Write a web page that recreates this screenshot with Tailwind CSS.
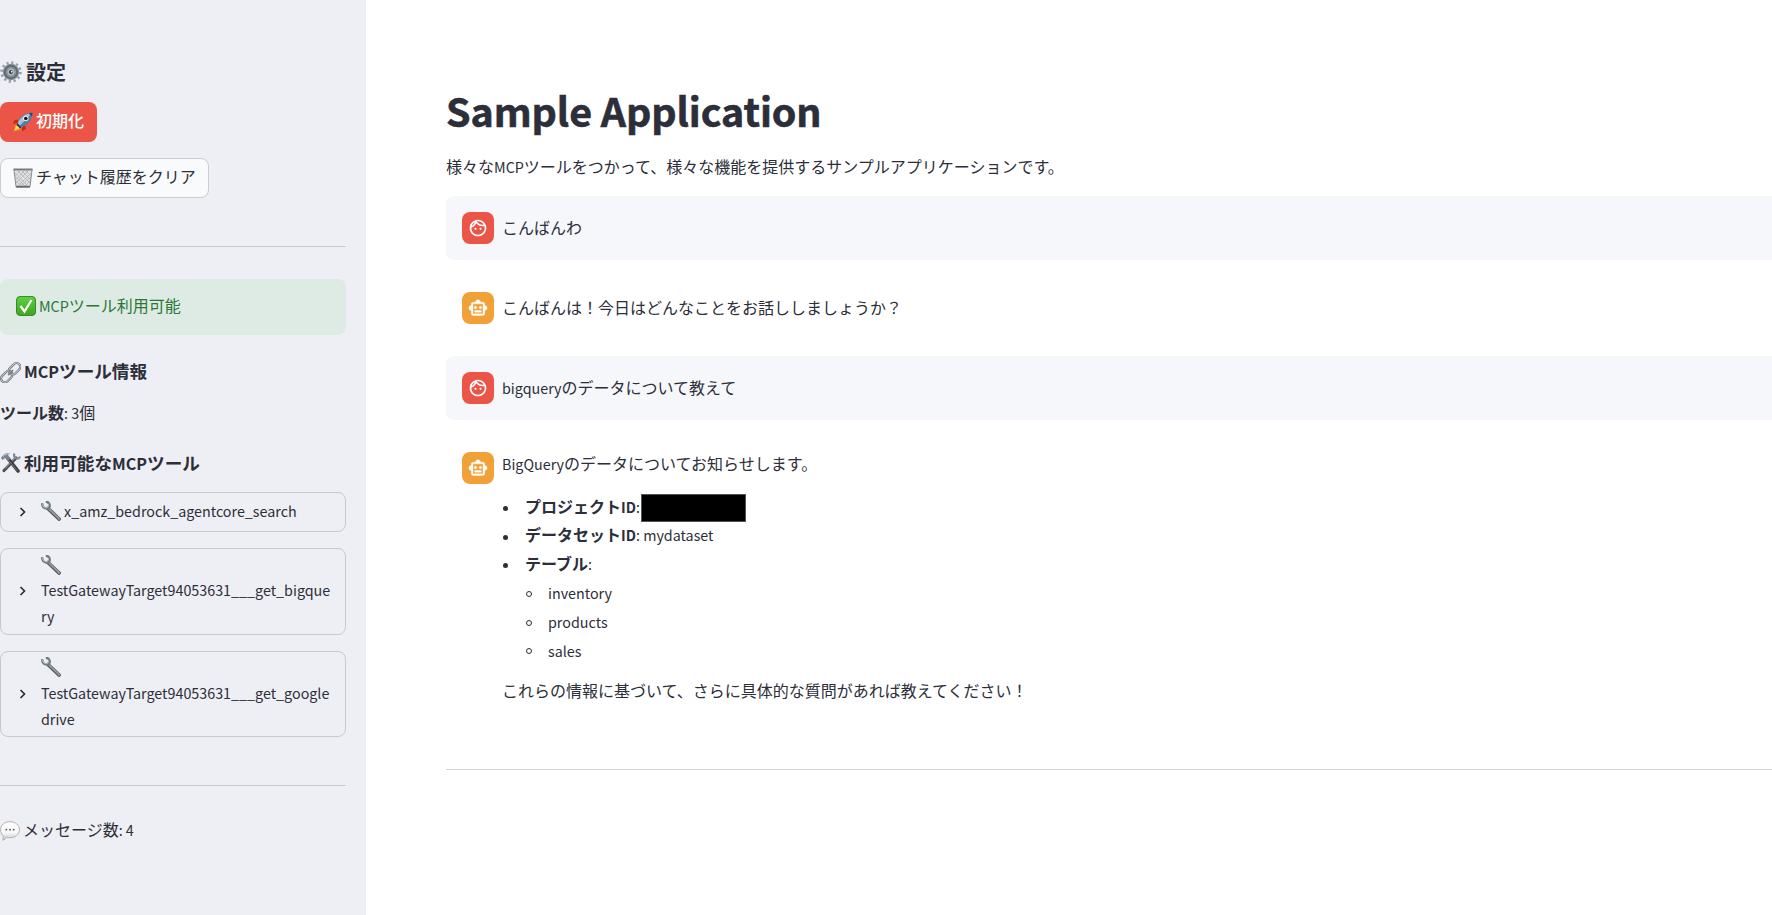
<!DOCTYPE html>
<html lang="ja">
<head>
<meta charset="utf-8">
<title>Sample Application</title>
<script src="https://cdn.jsdelivr.net/npm/@tailwindcss/browser@4"></script>
</head>
<body class="flex h-[915px] w-[1772px] overflow-hidden bg-white font-['Noto_Sans_CJK_JP',sans-serif] text-[16px] leading-[25.6px] text-[#2c2e39]">
<svg class="absolute size-0">
  <defs>
    <linearGradient id="green" x1="0" y1="0" x2="0" y2="1"><stop offset="0" stop-color="#5fd044"/><stop offset="1" stop-color="#3fa51f"/></linearGradient>
    <linearGradient id="bubble" x1="0" y1="0" x2="0" y2="1"><stop offset="0" stop-color="#fff"/><stop offset=".6" stop-color="#f6f6f5"/><stop offset="1" stop-color="#c9c9c7"/></linearGradient>
    <symbol id="wrench" viewBox="0 0 20 20">
      <path d="M7 7.500 18 18" stroke="#54575a" stroke-width="3.800" stroke-linecap="round"/>
      <path d="M7 7 17.500 17" stroke="#8f999f" stroke-width="1.800" stroke-linecap="round"/>
      <path d="M1.200 2.200C1 5.500 3 8 6.500 7.600 8.800 7 9.300 4.500 8 2.500 7.300 1.400 6 .7 4.800.7" fill="none" stroke="#6f7a82" stroke-width="2.400"/>
      <path d="M1.500 3.200C2 6 4 7.200 6 6.600 7.600 5.900 7.900 4 7 2.600" fill="none" stroke="#b3bec5" stroke-width="1"/>
      <circle cx="18" cy="18" r=".8" fill="#e3b5a5"/>
    </symbol>
    <symbol id="face" viewBox="0 0 24 24"><path fill="#fff" d="M10.250 13c0 .69-.56 1.250-1.250 1.250S7.750 13.690 7.750 13s.56-1.250 1.250-1.250 1.250.56 1.250 1.250zM15 11.750c-.69 0-1.250.56-1.250 1.250s.56 1.250 1.250 1.250 1.250-.56 1.250-1.250-.56-1.250-1.250-1.250zm7 .25c0 5.520-4.480 10-10 10S2 17.520 2 12 6.480 2 12 2s10 4.480 10 10zM10.660 4.120C12.060 6.440 14.600 8 17.500 8c.46 0 .91-.05 1.340-.12C17.440 5.560 14.900 4 12 4c-.46 0-.91.05-1.340.12zM4.420 9.470c1.710-.97 3.030-2.550 3.660-4.440C6.370 6 5.050 7.580 4.420 9.470zM20 12c0-.78-.12-1.530-.33-2.240-.7.15-1.420.24-2.170.24-3.130 0-5.920-1.440-7.760-3.690C8.690 8.870 6.600 10.880 4 11.860c.01.04 0 .09 0 .14 0 4.410 3.590 8 8 8s8-3.590 8-8z"/></symbol>
    <symbol id="robot" viewBox="0 0 24 24"><path fill="#fff" stroke="#fff" stroke-width=".4" d="M20 9V7c0-1.100-.9-2-2-2h-3c0-1.660-1.340-3-3-3S9 3.340 9 5H6c-1.100 0-2 .9-2 2v2c-1.660 0-3 1.340-3 3s1.340 3 3 3v4c0 1.100.9 2 2 2h12c1.100 0 2-.9 2-2v-4c1.660 0 3-1.340 3-3s-1.340-3-3-3zm-2 10H6V7h12v12zm-9-6c-.83 0-1.500-.67-1.500-1.500S8.170 10 9 10s1.500.67 1.500 1.500S9.830 13 9 13zm7.500-1.500c0 .83-.67 1.500-1.500 1.500s-1.500-.67-1.500-1.500.67-1.500 1.500-1.500 1.500.67 1.500 1.500zM8 15h8v2H8v-2z"/></symbol>
    <symbol id="chevron" viewBox="0 0 8 10"><path d="M1.500 1 5.500 5 1.500 9" fill="none" stroke="#2c2e39" stroke-width="1.700"/></symbol>
  </defs>
</svg>

<aside class="flex h-full w-[366px] shrink-0 flex-col bg-[#eeeff4] pr-5 pt-[57px]">
  <h2 class="flex h-[30px] items-center gap-1 text-[20px] font-bold leading-[30px]">
    <svg class="size-[22px]" viewBox="0 0 22 22">
      <circle cx="11" cy="11" r="9.400" fill="none" stroke="#8fa0ab" stroke-width="2.600" stroke-dasharray="2.200 2.722"/>
      <circle cx="11" cy="11" r="8.200" fill="#879299"/><circle cx="11" cy="11" r="6.200" fill="none" stroke="#616b72" stroke-width="2"/>
      <circle cx="11" cy="11" r="3.500" fill="#aeb8be"/><circle cx="11" cy="11" r="2" fill="#34383c"/><circle cx="11.700" cy="10.700" r=".9" fill="#fff"/>
    </svg>設定
  </h2>
  <button class="mt-[15px] flex h-10 w-[97px] shrink-0 items-center gap-[3px] rounded-lg bg-[#eb5547] pl-[13px] font-medium text-white">
    <svg class="size-5 shrink-0" viewBox="0 0 20 20">
      <path d="M5 7.500 1 8.500.300 12 5 11zM12 13l1 3.500-3.500 3L8.500 15z" fill="#c9281d"/>
      <path d="M5 11 1 14l1 1-1.500 4.500L6 18l1 .5 2.500-4z" fill="#f58b1e"/><path d="M5 12.500 2.500 15l-1 3.500 4-1.500L8 14z" fill="#ffe34d"/>
      <path d="M4.500 12C5.500 6 10 1.500 19.500.5 19 8 14.500 13.500 8 15.500z" fill="#4e7fa9"/>
      <path d="M4.500 12C6 6.500 11 2.500 19.500.5L6.500 14z" fill="#a9c3d6"/><path d="M15.500 1.200 19.500.5 19 4.500z" fill="#1f4b79"/>
      <path d="M4.500 11 8.500 15.500 7 16.500 3.500 13z" fill="#233b54"/><circle cx="12.800" cy="6.500" r="2.700" fill="#e9eff2"/><circle cx="12.800" cy="6.500" r="1.800" fill="#15181d"/>
    </svg><span class="-mt-0.5">初期化</span>
  </button>
  <button class="mt-4 flex h-10 w-[209px] shrink-0 items-center gap-[3px] rounded-lg border border-[#cbccd1] bg-[#f9fafc] pl-3">
    <svg class="size-5 shrink-0" viewBox="0 0 20 20">
      <path d="M1 2.200 3 18.600h14L19 2.200z" fill="#dfe1e2"/>
      <path d="M2 5 15 18M2.500 9 12 18M3 13l5 5M5 3l12 12M9 3l9 9M13 3l5 5M18 5 5 18M17.500 9 8 18M17 13l-5 5M15 3 3 15M11 3 2.500 12M7 3 2 8" stroke="#a2a6a7" stroke-width=".6"/>
      <path d="M1 2.200 3 18.600M19 2.200 17 18.600" stroke="#898e90"/><rect x=".2" y=".5" width="19.600" height="2" rx="1" fill="#777b7d"/><rect x="2.800" y="17.700" width="14.400" height="2" rx="1" fill="#696d6f"/>
    </svg><span class="-mt-0.5">チャット履歴をクリア</span>
  </button>
  <hr class="mt-12 w-full border-[#c8c9cf]">
  <div class="mt-8 flex h-14 shrink-0 items-center gap-[3px] rounded-lg bg-[#ddebe4] pl-4 text-[#2c7736]">
    <svg class="-mt-0.5 size-5" viewBox="0 0 20 20"><rect x=".5" y=".5" width="19" height="19" rx="3.500" fill="url(#green)" stroke="#388d24"/><path d="m4.500 10 4 5.500 7-11.500" fill="none" stroke="#fff" stroke-width="2.200"/></svg>
    <span class="-mt-0.5"><span class="text-[14.320px]">MCP</span>ツール利用可能</span>
  </div>
  <h3 class="mt-[23px] flex h-7 items-center gap-[3px] text-[17.600px] font-bold leading-7">
    <svg class="size-[21px]" viewBox="0 0 21 21" fill="none">
      <g transform="rotate(-45 10.500 10.500)"><rect x="-1.500" y="7" width="13" height="7.500" rx="3.700" stroke="#60666b" stroke-width="2.200"/><rect x="-1.500" y="7" width="13" height="7.500" rx="3.700" stroke="#c4cbd0" stroke-width="1"/><rect x="9.500" y="7" width="13" height="7.500" rx="3.700" stroke="#60666b" stroke-width="2.200"/><rect x="9.500" y="7" width="13" height="7.500" rx="3.700" stroke="#c4cbd0" stroke-width="1"/><path d="M7 10.700h7" stroke="#777e83" stroke-width="1.600"/></g>
    </svg><span class="-mt-0.5"><span class="text-[16.110px]">MCP</span>ツール情報</span>
  </h3>
  <p class="mt-[14px]"><b>ツール数</b><span class="text-[14.320px]">: 3</span>個</p>
  <h3 class="mt-[23.4px] flex h-7 items-center gap-[3px] text-[17.600px] font-bold leading-7">
    <svg class="size-[21px]" viewBox="0 0 21 21" fill="none">
      <path d="M16 6 4 18.500" stroke="#4b4e51" stroke-width="3.200" stroke-linecap="round"/><path d="M16 5 5 16.500" stroke="#a4adb3"/><path d="M14.500 1.500c-1 2 0 4.500 2 5 1.500.3 3-.5 3.500-2" stroke="#7e888f" stroke-width="2.200"/>
      <path d="m8.500 7 9.500 12" stroke="#403c3b" stroke-width="3.600" stroke-linecap="round"/><path d="m8.500 8 8.500 10.500" stroke="#85807e"/><path d="M1 6C3 2.500 6 .5 10 1L8 3l2.500 3.500-3 2.500L5 6 2.500 8z" fill="#74838e"/><path d="M3 4.500C5 2.500 7 2 9 1.500" stroke="#c3cdd4"/>
    </svg><span>利用可能な<span class="text-[16.110px]">MCP</span>ツール</span>
  </h3>
  <div class="mt-[15px] flex h-10 shrink-0 items-center rounded-lg border border-[#c8c9cf] pl-[18px]">
    <svg class="h-2.5 w-2"><use href="#chevron"/></svg>
    <svg class="ml-[14px] mr-[3px] size-5 -translate-y-px"><use href="#wrench"/></svg>
    <span class="-mt-0.5 text-[14.320px]">x_amz_bedrock_agentcore_search</span>
  </div>
  <div class="mt-4 flex h-[87px] shrink-0 items-center rounded-lg border border-[#c8c9cf] pl-[18px]">
    <svg class="h-2.5 w-2"><use href="#chevron"/></svg>
    <div class="-mt-[3px] ml-[14px] text-[14.320px] leading-[26px]"><div class="flex h-[26px] items-center pt-0.5"><svg class="size-5"><use href="#wrench"/></svg></div>TestGatewayTarget94053631___get_bigque<br>ry</div>
  </div>
  <div class="mt-4 flex h-[86px] shrink-0 items-center rounded-lg border border-[#c8c9cf] pl-[18px]">
    <svg class="h-2.5 w-2"><use href="#chevron"/></svg>
    <div class="-mt-0.5 ml-[14px] text-[14.320px] leading-[26px]"><div class="flex h-[26px] items-center pt-px"><svg class="size-5"><use href="#wrench"/></svg></div>TestGatewayTarget94053631___get_google<br>drive</div>
  </div>
  <hr class="mt-12 w-full border-[#c8c9cf]">
  <p class="mt-[31px] flex items-center gap-[3px]">
    <svg class="mt-0.5 size-5" viewBox="0 0 20 20"><path d="M10 .7c5.500 0 9.400 3.400 9.400 8s-3.900 8-9.400 8c-1.200 0-2.300-.2-3.300-.5-.8 1.300-2.100 2.500-4 3 .6-1.200.7-2.800.3-4.400C1.500 13.300.6 11.100.6 8.700c0-4.600 3.900-8 9.400-8z" fill="url(#bubble)" stroke="#a9aaa9" stroke-width=".9"/><circle cx="6.300" cy="8.700" r=".9" fill="#555"/><circle cx="10" cy="8.700" r=".9" fill="#555"/><circle cx="13.700" cy="8.700" r=".9" fill="#555"/></svg>
    <span>メッセージ数<span class="text-[14.320px]">: 4</span></span>
  </p>
</aside>

<main class="flex min-w-0 flex-1 flex-col pl-20 pt-[83px]">
  <h1 class="h-[53px] text-[39.380px] font-bold leading-[53px] tracking-[-0.08px] [-webkit-text-stroke:0.6px_#2c2e39]">Sample Application</h1>
  <p class="mt-[18px] h-[26px]">様々な<span class="text-[14.320px]">MCP</span>ツールをつかって、様々な機能を提供するサンプルアプリケーションです。</p>
  <section class="mt-4 flex h-16 shrink-0 items-center gap-2 rounded-l-lg bg-[#f5f7fb] pl-4">
    <div class="flex size-8 items-center justify-center rounded-lg bg-[#eb5547]"><svg class="size-5"><use href="#face"/></svg></div><p>こんばんわ</p>
  </section>
  <section class="mt-4 flex h-16 shrink-0 items-center gap-2 pl-4">
    <div class="flex size-8 items-center justify-center rounded-lg bg-[#f1a138]"><svg class="size-5"><use href="#robot"/></svg></div><p>こんばんは！今日はどんなことをお話ししましょうか？</p>
  </section>
  <section class="mt-4 flex h-16 shrink-0 items-center gap-2 rounded-l-lg bg-[#f5f7fb] pl-4">
    <div class="flex size-8 items-center justify-center rounded-lg bg-[#eb5547]"><svg class="size-5"><use href="#face"/></svg></div><p><span class="text-[14.320px]">bigquery</span>のデータについて教えて</p>
  </section>
  <section class="mt-4 flex h-[269px] shrink-0 gap-2 pl-4 pt-4">
    <div class="flex size-8 items-center justify-center rounded-lg bg-[#f1a138]"><svg class="size-5"><use href="#robot"/></svg></div>
    <div class="-mt-px">
      <p><span class="text-[14.320px]">BigQuery</span>のデータについてお知らせします。</p>
      <ul class="mt-[17px] flex flex-col gap-[3.200px]">
        <li class="flex h-[25.600px] items-center"><i class="ml-px mr-[17px] mt-1 size-[5px] rounded-full bg-[#2c2e39]"></i><b>プロジェクト<span class="text-[14.320px]">ID</span></b><span class="text-[14.320px]">:</span><span class="ml-px mt-[3px] h-7 w-[105px] border border-[#555] bg-black"></span></li>
        <li class="flex h-[25.600px] items-center"><i class="ml-px mr-[17px] mt-1 size-[5px] rounded-full bg-[#2c2e39]"></i><p><b>データセット<span class="text-[14.320px]">ID</span></b><span class="text-[14.320px]">: mydataset</span></p></li>
        <li class="flex h-[25.600px] items-center"><i class="ml-px mr-[17px] mt-1 size-[5px] rounded-full bg-[#2c2e39]"></i><p><b>テーブル</b><span class="text-[14.320px]">:</span></p></li>
        <li class="flex h-[25.600px] items-center pl-6 text-[14.320px]"><i class="mr-4 mt-0.5 size-1.5 rounded-full border border-[#2c2e39]"></i>inventory</li>
        <li class="flex h-[25.600px] items-center pl-6 text-[14.320px]"><i class="mr-4 mt-0.5 size-1.5 rounded-full border border-[#2c2e39]"></i>products</li>
        <li class="flex h-[25.600px] items-center pl-6 text-[14.320px]"><i class="mr-4 mt-0.5 size-1.5 rounded-full border border-[#2c2e39]"></i>sales</li>
      </ul>
      <p class="mt-[15px]">これらの情報に基づいて、さらに具体的な質問があれば教えてください！</p>
    </div>
  </section>
  <hr class="mt-[64px] w-full border-[#d3d4d8]">
</main>
</body>
</html>
